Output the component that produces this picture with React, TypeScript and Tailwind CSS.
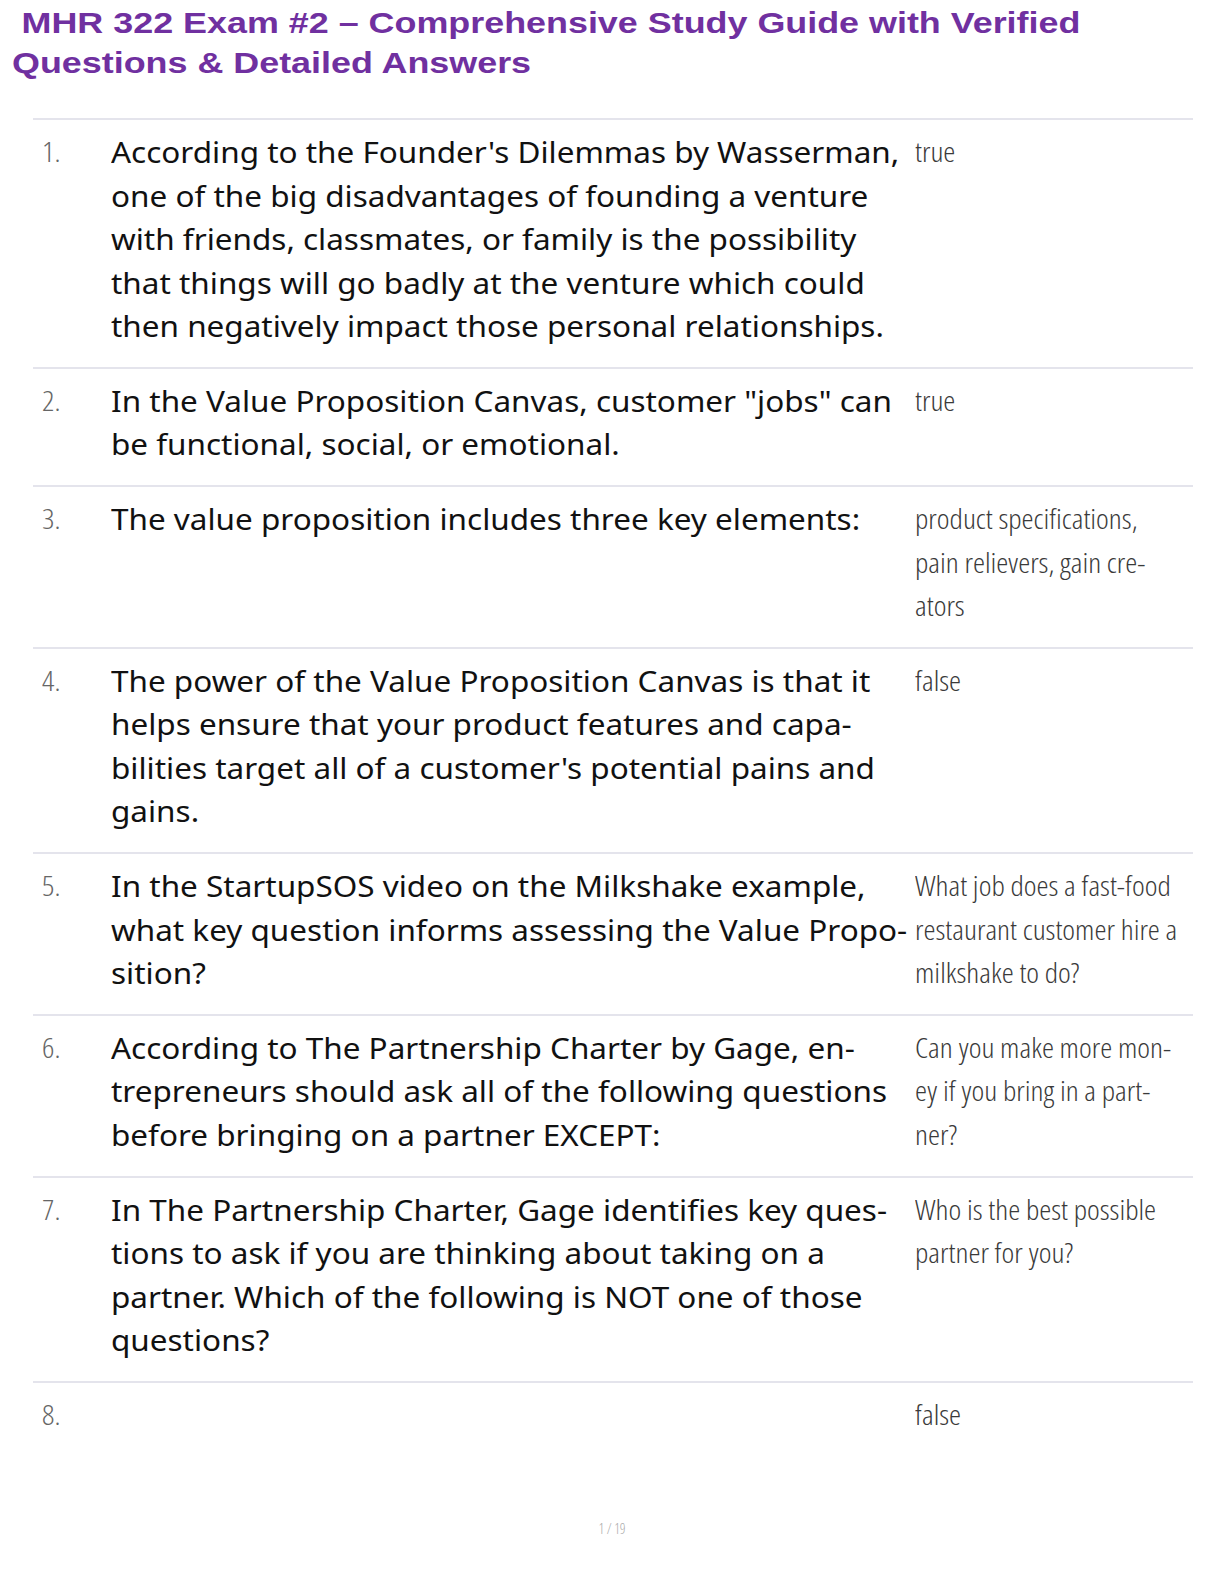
const questions: { q: string[]; a: string[] }[] = [
  {
    q: [
      "According to the Founder's Dilemmas by Wasserman,",
      "one of the big disadvantages of founding a venture",
      "with friends, classmates, or family is the possibility",
      "that things will go badly at the venture which could",
      "then negatively impact those personal relationships.",
    ],
    a: ["true"],
  },
  {
    q: ['In the Value Proposition Canvas, customer "jobs" can', "be functional, social, or emotional."],
    a: ["true"],
  },
  {
    q: ["The value proposition includes three key elements:"],
    a: ["product specifications,", "pain relievers, gain cre-", "ators"],
  },
  {
    q: [
      "The power of the Value Proposition Canvas is that it",
      "helps ensure that your product features and capa-",
      "bilities target all of a customer's potential pains and",
      "gains.",
    ],
    a: ["false"],
  },
  {
    q: [
      "In the StartupSOS video on the Milkshake example,",
      "what key question informs assessing the Value Propo-",
      "sition?",
    ],
    a: ["What job does a fast-food", "restaurant customer hire a", "milkshake to do?"],
  },
  {
    q: [
      "According to The Partnership Charter by Gage, en-",
      "trepreneurs should ask all of the following questions",
      "before bringing on a partner EXCEPT:",
    ],
    a: ["Can you make more mon-", "ey if you bring in a part-", "ner?"],
  },
  {
    q: [
      "In The Partnership Charter, Gage identifies key ques-",
      "tions to ask if you are thinking about taking on a",
      "partner. Which of the following is NOT one of those",
      "questions?",
    ],
    a: ["Who is the best possible", "partner for you?"],
  },
  { q: [], a: ["false"] },
];

function Lines({ lines, stretch }: { lines: string[]; stretch: string }) {
  return (
    <>
      {lines.map((l, i) => (
        <span key={i} className={`block whitespace-nowrap origin-left ${stretch}`}>
          {l}
        </span>
      ))}
    </>
  );
}

export default function App() {
  return (
    <div className="relative w-[1224px] h-[1584px] bg-white overflow-hidden">
      <h1 className="pt-[3px] pl-[12px] font-['Liberation_Sans',Arial,sans-serif] font-bold text-[30px] leading-[40px] text-[#7030a0]">
        <span className="block whitespace-nowrap origin-left scale-x-[1.196] pl-[8px]">
          MHR 322 Exam #2 – Comprehensive Study Guide with Verified
        </span>
        <span className="block whitespace-nowrap origin-left scale-x-[1.196]">
          Questions &amp; Detailed Answers
        </span>
      </h1>

      <div className="mt-[35px] ml-[33px] w-[1160px]">
        {questions.map((item, i) => (
          <div
            key={i}
            className="grid grid-cols-[78px_804px_278px] pt-[10px] pb-[19.3px] leading-[43.5px] border-t-2 border-[#e4e4ec]"
          >
            <div className="pl-[9px] font-['Open_Sans',sans-serif] font-light font-stretch-condensed text-[27px] text-[#666]">
              <span className="block origin-left scale-x-[1.128]">{i + 1}.</span>
            </div>
            <div className="font-['Noto_Sans',sans-serif] text-[29px] text-[#111]">
              <Lines lines={item.q} stretch="scale-x-[1.085]" />
            </div>
            <div className="font-['Open_Sans',sans-serif] font-light font-stretch-condensed text-[27px] text-[#3a3a3a]">
              <Lines lines={item.a} stretch="scale-x-[1.128]" />
            </div>
          </div>
        ))}
      </div>

      <div className="absolute left-0 right-0 top-[1518px] text-center font-['Open_Sans',sans-serif] font-light font-stretch-condensed text-[14px] text-[#aaa]">
        1 / 19
      </div>
    </div>
  );
}
